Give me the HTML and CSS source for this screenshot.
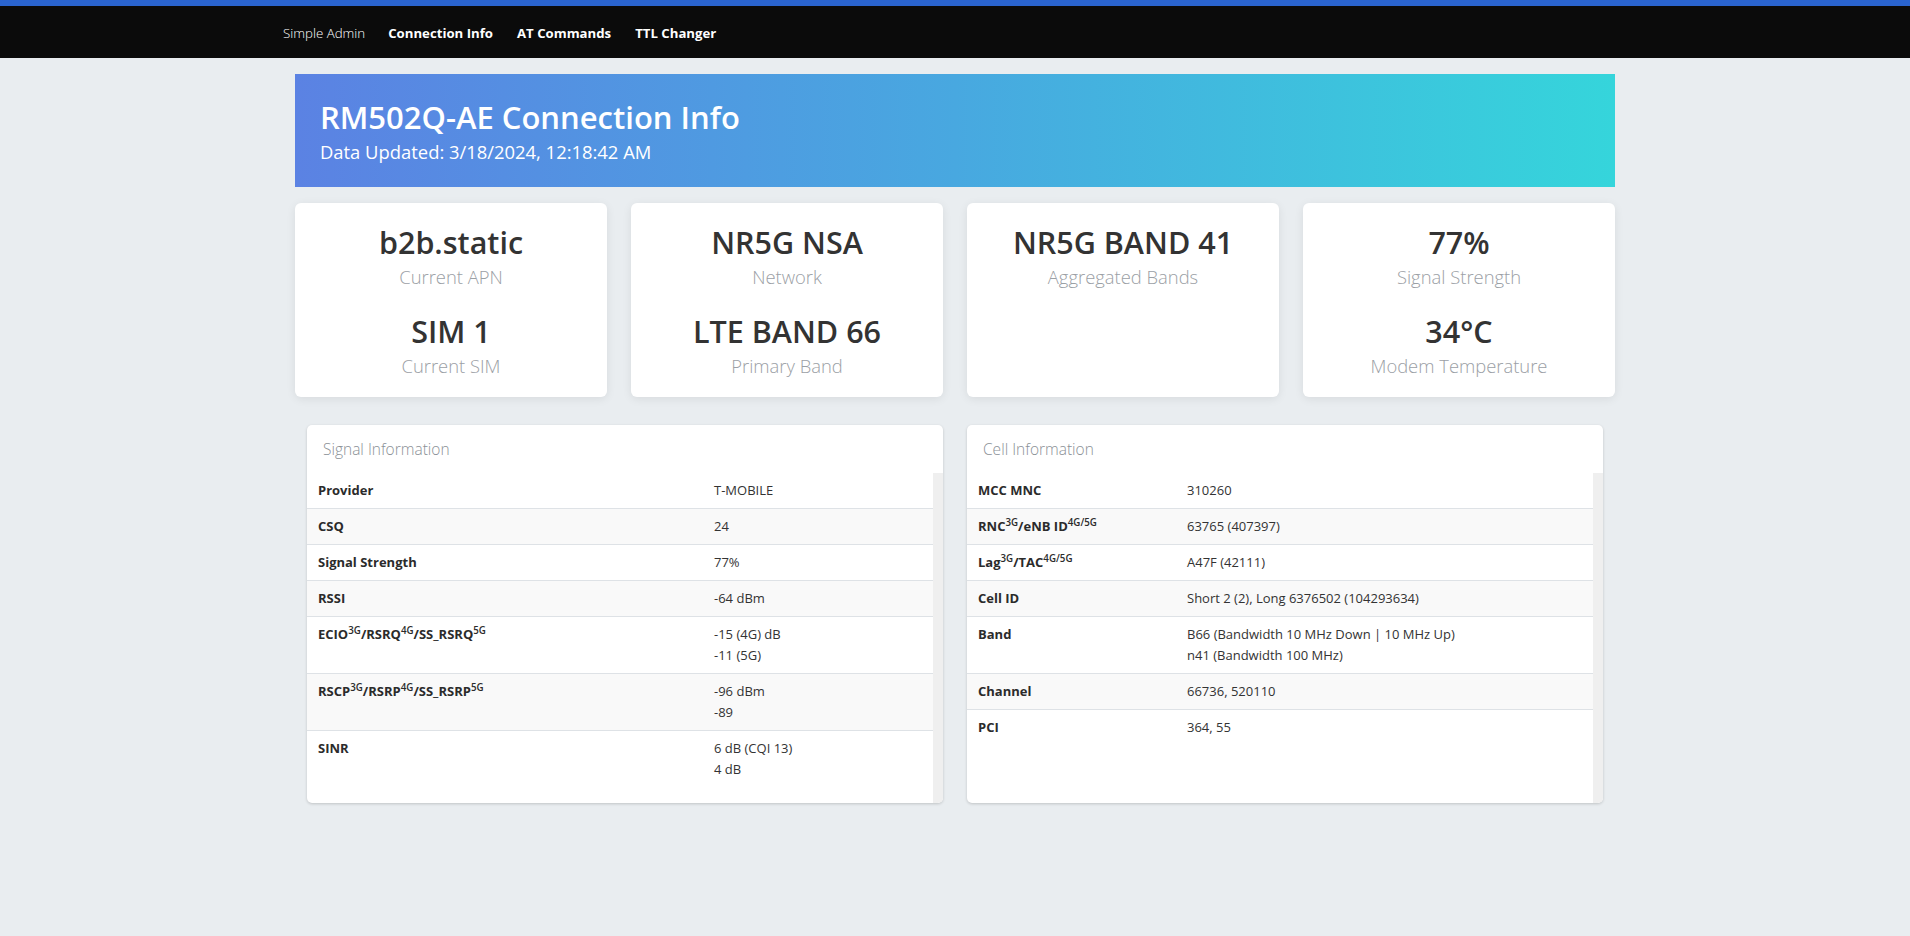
FILE: index.html
```html
<!DOCTYPE html>
<html lang="en">
<head>
<meta charset="utf-8">
<title>RM502Q-AE Connection Info</title>
<link rel="stylesheet" href="styles.css">
</head>
<body>
<nav class="navbar">
  <div class="nav-inner">
    <a class="brand" href="#">Simple Admin</a>
    <a class="nav-link" href="#">Connection Info</a>
    <a class="nav-link" href="#">AT Commands</a>
    <a class="nav-link" href="#">TTL Changer</a>
  </div>
</nav>

<main class="container">
  <header class="hero">
    <h1 class="hero-title">RM502Q-AE Connection Info</h1>
    <p class="hero-sub">Data Updated: 3/18/2024, 12:18:42 AM</p>
  </header>

  <section class="stats">
    <div class="stat-card">
      <div class="stat-group">
        <div class="stat-value">b2b.static</div>
        <div class="stat-label">Current APN</div>
      </div>
      <div class="stat-group">
        <div class="stat-value">SIM 1</div>
        <div class="stat-label">Current SIM</div>
      </div>
    </div>
    <div class="stat-card">
      <div class="stat-group">
        <div class="stat-value">NR5G NSA</div>
        <div class="stat-label">Network</div>
      </div>
      <div class="stat-group">
        <div class="stat-value">LTE BAND 66</div>
        <div class="stat-label">Primary Band</div>
      </div>
    </div>
    <div class="stat-card">
      <div class="stat-group">
        <div class="stat-value">NR5G BAND 41</div>
        <div class="stat-label">Aggregated Bands</div>
      </div>
    </div>
    <div class="stat-card">
      <div class="stat-group">
        <div class="stat-value">77%</div>
        <div class="stat-label">Signal Strength</div>
      </div>
      <div class="stat-group">
        <div class="stat-value">34°C</div>
        <div class="stat-label">Modem Temperature</div>
      </div>
    </div>
  </section>

  <section class="details">
    <div class="info-card">
      <div class="info-header">Signal Information</div>
      <div class="info-scroll">
        <table class="info-table">
          <colgroup><col class="col-signal-label"><col></colgroup>
          <tbody>
            <tr><th>Provider</th><td>T-MOBILE</td></tr>
            <tr><th>CSQ</th><td>24</td></tr>
            <tr><th>Signal Strength</th><td>77%</td></tr>
            <tr><th>RSSI</th><td>-64 dBm</td></tr>
            <tr><th>ECIO<sup>3G</sup>/RSRQ<sup>4G</sup>/SS_RSRQ<sup>5G</sup></th><td>-15 (4G) dB<br>-11 (5G)</td></tr>
            <tr><th>RSCP<sup>3G</sup>/RSRP<sup>4G</sup>/SS_RSRP<sup>5G</sup></th><td>-96 dBm<br>-89</td></tr>
            <tr><th>SINR</th><td>6 dB (CQI 13)<br>4 dB</td></tr>
          </tbody>
        </table>
      </div>
    </div>
    <div class="info-card">
      <div class="info-header">Cell Information</div>
      <div class="info-scroll">
        <table class="info-table">
          <colgroup><col class="col-cell-label"><col></colgroup>
          <tbody>
            <tr><th>MCC MNC</th><td>310260</td></tr>
            <tr><th>RNC<sup>3G</sup>/eNB ID<sup>4G/5G</sup></th><td>63765 (407397)</td></tr>
            <tr><th>Lag<sup>3G</sup>/TAC<sup>4G/5G</sup></th><td>A47F (42111)</td></tr>
            <tr><th>Cell ID</th><td>Short 2 (2), Long 6376502 (104293634)</td></tr>
            <tr><th>Band</th><td>B66 (Bandwidth 10 MHz Down | 10 MHz Up)<br>n41 (Bandwidth 100 MHz)</td></tr>
            <tr><th>Channel</th><td>66736, 520110</td></tr>
            <tr><th>PCI</th><td>364, 55</td></tr>
          </tbody>
        </table>
      </div>
    </div>
  </section>
</main>
</body>
</html>
```

FILE: styles.css
```css
* { box-sizing: border-box; }

html, body {
  margin: 0;
  padding: 0;
}

body {
  background: #e9edf0;
  font-family: "Open Sans", "Noto Sans", sans-serif;
  color: #333;
  min-height: 936px;
}

/* ---------- Navbar ---------- */
.navbar {
  background: #0b0b0b;
  border-top: 6px solid #2a64cf;
  height: 58px;
}

.nav-inner {
  width: 1344px;
  margin: 0 auto;
  height: 52px;
  padding-top: 2px;
  display: flex;
  align-items: center;
  gap: 24px;
}

.brand {
  color: #fff;
  font-size: 13.3px;
  font-weight: 300;
  text-decoration: none;
  margin-right: -1px;
}

.nav-link {
  color: #fff;
  font-size: 13.2px;
  font-weight: 700;
  text-decoration: none;
}

/* ---------- Main container ---------- */
.container {
  width: 1320px;
  margin: 0 auto;
  padding-top: 16px;
}

.hero {
  background: linear-gradient(90deg, #5b82e3 0%, #48a8e0 50%, #35d5db 100%);
  padding: 25px 25px 21px;
  color: #fff;
}

.hero-title {
  margin: 0 0 2px;
  font-size: 31px;
  font-weight: 600;
  line-height: 37px;
}

.hero-sub {
  margin: 0;
  font-size: 18.4px;
  font-weight: 400;
  line-height: 27.6px;
}

/* ---------- Stat cards ---------- */
.stats {
  margin-top: 16px;
  display: grid;
  grid-template-columns: repeat(4, 1fr);
  gap: 24px;
}

.stat-card {
  background: #fff;
  border-radius: 6px;
  box-shadow: 0 2px 10px rgba(0, 0, 0, 0.08);
  padding: 21px 16px 17px;
  text-align: center;
}

.stat-group + .stat-group {
  margin-top: 22px;
}

.stat-value {
  font-size: 30.5px;
  font-weight: 600;
  line-height: 36px;
  color: #333;
}

.stat-label {
  margin-top: 3px;
  font-size: 18.4px;
  font-weight: 300;
  line-height: 28px;
  color: #9ba0a5;
}

/* ---------- Detail tables ---------- */
.details {
  margin-top: 28px;
  padding: 0 12px;
  display: grid;
  grid-template-columns: 1fr 1fr;
  gap: 24px;
}

.info-card {
  background: #fff;
  border-radius: 5px;
  overflow: hidden;
  box-shadow: 0 1px 3px rgba(0, 0, 0, 0.18);
  display: flex;
  flex-direction: column;
}

.info-header {
  padding: 12px 16px;
  font-size: 15.5px;
  font-weight: 300;
  line-height: 24px;
  color: #8a9096;
}

.info-scroll {
  flex: 1;
  border-right: 10px solid #efefef;
  padding-bottom: 16px;
}

.info-table {
  width: 100%;
  border-collapse: collapse;
  table-layout: fixed;
  font-size: 13px;
  color: #333;
}

.col-signal-label { width: 396px; }
.col-cell-label { width: 209px; }

.info-table th,
.info-table td {
  padding: 7px 11px;
  line-height: 21px;
  text-align: left;
  vertical-align: top;
  border-bottom: 1px solid #dee2e6;
}

.info-table th {
  font-weight: 700;
  color: #2b2b2b;
}

.info-table td {
  font-weight: 400;
}

.info-table tr:nth-child(even) {
  background: #f9f9f9;
}

.info-table tr:last-child th,
.info-table tr:last-child td {
  border-bottom: none;
}

.info-table sup {
  position: relative;
  top: -0.5em;
  font-size: 0.75em;
  line-height: 0;
  vertical-align: baseline;
  font-weight: 600;
}
```
